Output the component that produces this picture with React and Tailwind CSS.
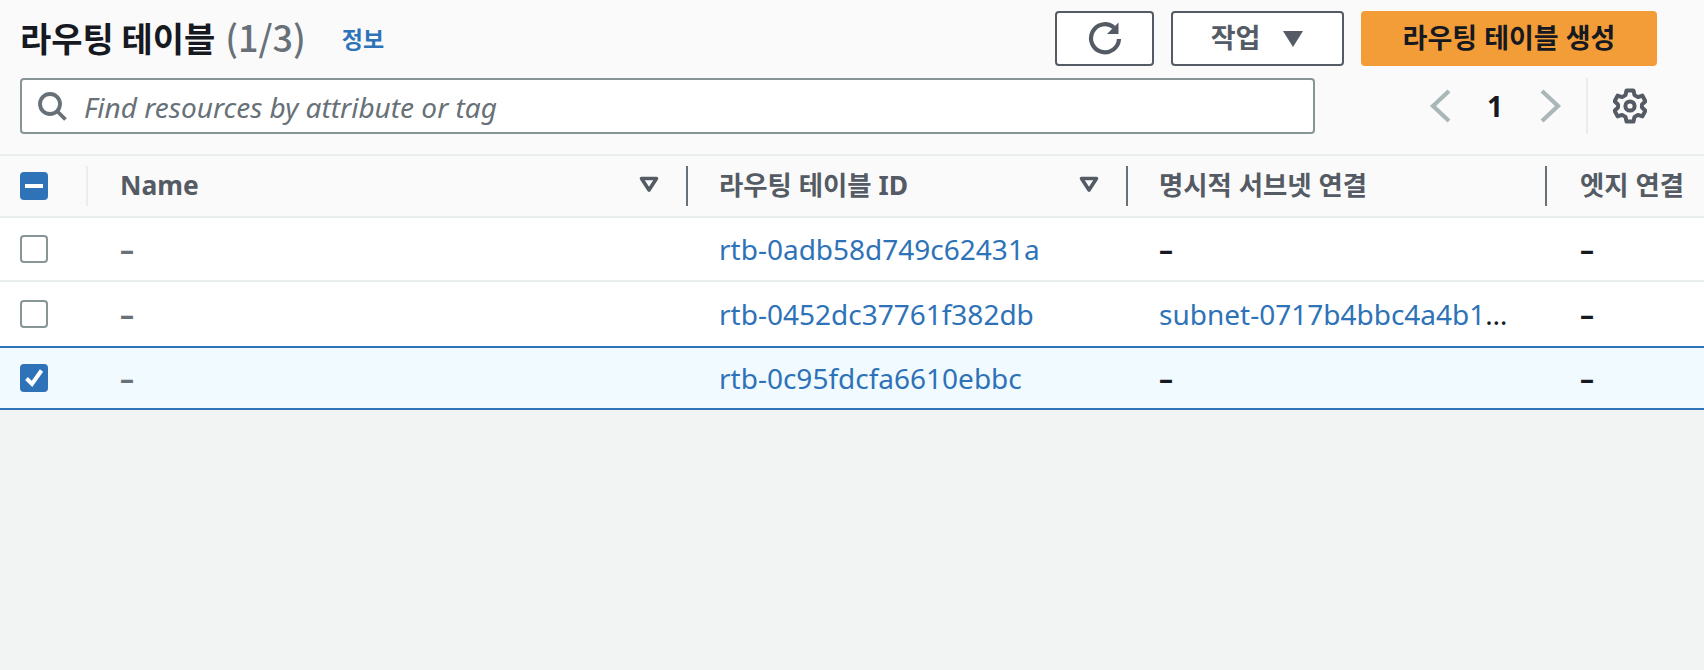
import React from "react";

const rows = [
  { id: "rtb-0adb58d749c62431a", subnet: null, selected: false },
  { id: "rtb-0452dc37761f382db", subnet: "subnet-0717b4bbc4a4b1", selected: false },
  { id: "rtb-0c95fdcfa6610ebbc", subnet: null, selected: true },
];

function Dash({ className }) {
  return <span className={`font-bold ${className}`}>–</span>;
}

function SortIcon() {
  return (
    <svg width="20" height="17" viewBox="0 0 20 17" fill="none" stroke="#545b64" strokeWidth="3.6" strokeLinejoin="round">
      <path d="M2.5 2.5h15L10 14z" />
    </svg>
  );
}

function HeaderCell({ width, label, sort, divider, pl }) {
  return (
    <div className={`relative flex h-full items-center ${width} ${pl}`}>
      <span className="text-[26.4px] font-bold text-[#545b64]">{label}</span>
      {sort && (
        <span className="absolute right-[29px] top-[20px] flex">
          <SortIcon />
        </span>
      )}
      {divider && <span className="absolute right-0 top-[10px] h-[40px] w-[2px] bg-[#687078]" />}
    </div>
  );
}

function Checkbox({ checked }) {
  if (checked) {
    return (
      <span className="flex h-[28px] w-[28px] items-center justify-center rounded-[4px] bg-[#2e72b8]">
        <svg width="22" height="22" viewBox="0 0 22 22" fill="none" stroke="#fff" strokeWidth="4">
          <path d="M3.5 11.5l5.5 5.5L18.5 3.5" />
        </svg>
      </span>
    );
  }
  return <span className="block h-[28px] w-[28px] rounded-[4px] border-2 border-[#879596] bg-white" />;
}

export default function App() {
  return (
    <div
      className="h-[670px] w-[1704px] overflow-hidden bg-[#f2f3f3] text-[28px] text-[#16191f]"
      style={{ fontFamily: '"Noto Sans", "Noto Sans CJK KR", sans-serif' }}
    >
      <div className="h-[156px] border-b-2 border-[#eaeded] bg-[#fafafa] pl-[20px] pr-[47px]">
        <div className="flex h-[78px] items-start">
          <div className="flex items-center pt-[14px]">
            <h1 className="text-[34px] font-bold leading-[44px]" style={{ fontFamily: '"Noto Sans CJK KR", sans-serif' }}>
              라우팅 테이블 <span className="ml-[2px] text-[36px] font-medium text-[#687078]">(1/3)</span>
            </h1>
            <a className="ml-[36px] mt-[3px] text-[23px] font-bold leading-[30px] text-[#2e72b8]">정보</a>
          </div>
          <div className="ml-auto flex gap-[17px] pt-[11px]">
            <button className="flex h-[55px] w-[99px] items-center justify-center rounded-[4px] border-2 border-[#545b64] bg-white">
              <svg width="36" height="36" viewBox="0 0 36 36" fill="none" stroke="#545b64" strokeWidth="4.2">
                <path d="M27 6.5A14 14 0 1 0 32 18" />
                <path d="M31.5 1.5v11.5H20z" fill="#545b64" strokeWidth="0" />
              </svg>
            </button>
            <button className="flex h-[55px] w-[173px] items-center justify-center gap-[22px] rounded-[4px] border-2 border-[#545b64] bg-white font-bold text-[#545b64]">
              <span className="text-[27px]">작업</span>
              <svg width="22" height="18" viewBox="0 0 22 18">
                <path d="M1 1h20L11 17z" fill="#545b64" />
              </svg>
            </button>
            <button className="h-[55px] w-[296px] rounded-[4px] bg-[#f29d38] text-[27px] font-bold text-[#16191f]">
              라우팅 테이블 생성
            </button>
          </div>
        </div>
        <div className="flex items-center">
          <div className="flex h-[56px] w-[1295px] items-center gap-[17px] rounded-[4px] border-2 border-[#879596] bg-white pl-[15px]">
            <svg width="30" height="30" viewBox="0 0 30 30" fill="none" stroke="#687078" strokeWidth="3.8">
              <circle cx="13" cy="13" r="10" />
              <path d="M20 20l8.5 8.5" />
            </svg>
            <span className="mt-[2px] italic text-[#687078]">Find resources by attribute or tag</span>
          </div>
          <div className="relative ml-[111px] flex h-[56px] flex-1 items-center">
            <svg width="24" height="34" viewBox="0 0 24 34" fill="none" stroke="#aab7b8" strokeWidth="4.2" className="ml-[3px]">
              <path d="M20 2L4 17l16 15" />
            </svg>
            <span className="ml-[34px] font-bold">1</span>
            <svg width="24" height="34" viewBox="0 0 24 34" fill="none" stroke="#aab7b8" strokeWidth="4.2" className="ml-[35px]">
              <path d="M4 2l16 15L4 32" />
            </svg>
            <span className="ml-[24px] h-[56px] w-[2px] bg-[#eaeded]" />
            <svg width="34" height="36" viewBox="0 0 34 36" fill="none" stroke="#545b64" strokeWidth="4" strokeLinejoin="round" className="ml-[25px]">
              <path d="M13.5 2.5h7l1 4.6 3.4 2 4.5-1.5 3 5.7-3.4 3.1v3.2l3.4 3.1-3 5.7-4.5-1.5-3.4 2-1 4.6h-7l-1-4.6-3.4-2-4.5 1.5-3-5.7 3.4-3.1v-3.2L1.6 13.3l3-5.7 4.5 1.5 3.4-2z" />
              <circle cx="17" cy="18" r="4.6" />
            </svg>
          </div>
        </div>
      </div>

      <div className="flex h-[62px] items-center border-b-2 border-[#eaeded] bg-[#fafafa]">
        <div className="relative flex h-full w-[88px] items-center pl-[20px]">
          <span className="flex h-[28px] w-[28px] items-center justify-center rounded-[4px] bg-[#2e72b8]">
            <span className="block h-[4px] w-[18px] bg-white" />
          </span>
          <span className="absolute right-0 top-[10px] h-[40px] w-[2px] bg-[#eaeded]" />
        </div>
        <HeaderCell width="w-[600px]" pl="pl-[32px]" label="Name" sort divider />
        <HeaderCell width="w-[440px]" pl="pl-[31px]" label="라우팅 테이블 ID" sort divider />
        <HeaderCell width="w-[419px]" pl="pl-[31px]" label="명시적 서브넷 연결" divider />
        <HeaderCell width="flex-1" pl="pl-[33px]" label="엣지 연결" />
      </div>

      {rows.map((row, i) => (
        <div
          key={row.id}
          className={`flex h-[64px] items-center ${
            row.selected
              ? "border-y-2 border-[#2e72b8] bg-[#f1faff]"
              : `bg-white ${i === 0 ? "border-b-2 border-[#eaeded]" : ""}`
          }`}
        >
          <div className="flex w-[88px] pl-[20px]">
            <Checkbox checked={row.selected} />
          </div>
          <div className="w-[600px] pl-[32px]">
            <Dash className="text-[#687078]" />
          </div>
          <div className="w-[440px] pl-[31px] text-[#2e72b8]">{row.id}</div>
          <div className="w-[419px] pl-[31px]">
            {row.subnet ? (
              <div className="whitespace-nowrap">
                <a className="text-[#2e72b8]">{row.subnet}</a>…
              </div>
            ) : (
              <Dash />
            )}
          </div>
          <div className="flex-1 pl-[33px]">
            <Dash />
          </div>
        </div>
      ))}
    </div>
  );
}
